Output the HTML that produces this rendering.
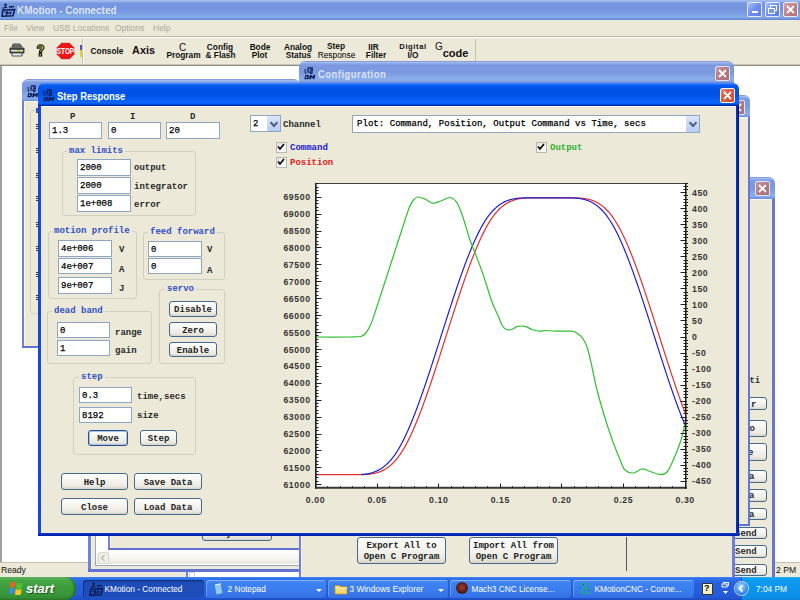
<!DOCTYPE html><html><head><meta charset="utf-8"><style>
*{margin:0;padding:0;box-sizing:content-box}
html,body{width:800px;height:600px;overflow:hidden;background:#fff;position:relative}
body>div,body>svg{position:absolute}
div{position:absolute}
.t{white-space:nowrap;font-family:"Liberation Mono",monospace;font-size:9px;font-weight:bold;color:#2a2a2a;line-height:13px}
.tt{white-space:nowrap;font-family:"Liberation Sans",sans-serif;font-size:11px;font-weight:bold;transform:scaleX(.86);transform-origin:0 0;line-height:14px}
.ed{background:#fff;border:1px solid #8EA6C0;font-family:"Liberation Mono",monospace;font-size:9px;font-weight:normal;color:#000;-webkit-text-stroke:.25px #000;line-height:16px;text-indent:2px;white-space:nowrap;overflow:hidden}
.bt{border:1px solid #46698E;border-radius:3px;background:linear-gradient(180deg,#FFFFFF 0%,#F6F5F0 40%,#ECEAE2 80%,#D8D4C8 100%);font-family:"Liberation Mono",monospace;font-size:9px;font-weight:bold;color:#222;text-align:center;white-space:nowrap}
.gb{border:1px solid #D0D0BF;border-radius:3px}
.gl{background:#ECE9D8;padding:0 2px;margin-top:1px;font-family:"Liberation Mono",monospace;font-size:9px;font-weight:bold;color:#3050C8;line-height:11px;white-space:nowrap}
.tl{white-space:nowrap;font-family:"Liberation Sans",sans-serif;text-align:center;line-height:10px}
.dd{width:13px;height:15px;background:linear-gradient(180deg,#DCE6FC,#B8CCF6);border:0;border-radius:1px}
.dd::after{content:'';position:absolute;left:3.5px;top:4px;width:4px;height:4px;border-right:2px solid #4D6185;border-bottom:2px solid #4D6185;transform:rotate(45deg)}
.cb{width:9px;height:9px;border:1px solid #B8B8B0;background:linear-gradient(135deg,#E4E4DC,#FFFFFF)}
</style></head><body>
<div style="left:0;top:0;width:800px;height:20px;background:linear-gradient(180deg,#A6C0F0 0px,#96B2EC 1.5px,#7898E0 3px,#7394DE 9px,#7A9EE2 13px,#84ACE8 16.5px,#7EA2E4 18px,#5C7ED0 20px);"></div>
<svg style="position:absolute;left:1px;top:3px" width="15" height="14" viewBox="0 0 15 14"><g fill="none" stroke="#0A1A50"><circle cx="4.5" cy="1.8" r=".9" fill="#0A1A50"/><path d="M2.5 4.6L6 4.2M8 4L13 3.6" stroke-width="1.4"/><path d="M1.8 7.2L13.6 6.6L12 12.8L1 13.2Z" stroke-width="1.5"/><path d="M3.5 9.8L6.5 8.8L5.5 11.2L10 9.2L9.2 11.6" stroke-width="1.1"/></g><path d="M2 4.9L2.6 6.2" stroke="#0A1A50" stroke-width="1"/></svg>
<div class="tt" style="left:17px;top:3px;color:#DDE6F8;font-size:11.5px;">KMotion - Connected</div>
<div style="left:747px;top:2px;width:13px;height:13px;border:1px solid #E8EEFC;border-radius:2px;background:linear-gradient(135deg,#A8C0F8 0%,#6C8EEE 50%,#5A7EE0 100%);"></div>
<div style="left:765px;top:2px;width:13px;height:13px;border:1px solid #E8EEFC;border-radius:2px;background:linear-gradient(135deg,#A8C0F8 0%,#6C8EEE 50%,#5A7EE0 100%);"></div>
<div style="left:783px;top:2px;width:13px;height:13px;border:1px solid #E8EEFC;border-radius:2px;background:linear-gradient(135deg,#D6A0A8 0%,#C08088 50%,#B07078 100%);"></div>
<div style="left:752px;top:11px;width:6px;height:2px;background:#fff"></div>
<svg style="position:absolute;left:765px;top:2px" width="15" height="15"><rect x="5.5" y="3.5" width="6" height="5" fill="none" stroke="#fff" stroke-width="1"/><rect x="3.5" y="6.5" width="6" height="5" fill="#7A98EA" stroke="#fff" stroke-width="1"/></svg>
<svg style="position:absolute;left:783px;top:2px" width="15" height="15"><path d="M4 4L11 11M11 4L4 11" stroke="#fff" stroke-width="1.8"/></svg>
<div style="left:0;top:20px;width:800px;height:16px;background:#ECE9D8;"></div>
<div class="t" style="left:4px;top:22px;font-family:&quot;Liberation Sans&quot;,sans-serif;font-weight:normal;font-size:8.5px;color:#ACA899;line-height:12px">File</div>
<div class="t" style="left:26px;top:22px;font-family:&quot;Liberation Sans&quot;,sans-serif;font-weight:normal;font-size:8.5px;color:#ACA899;line-height:12px">View</div>
<div class="t" style="left:53px;top:22px;font-family:&quot;Liberation Sans&quot;,sans-serif;font-weight:normal;font-size:8.5px;color:#ACA899;line-height:12px">USB Locations</div>
<div class="t" style="left:115px;top:22px;font-family:&quot;Liberation Sans&quot;,sans-serif;font-weight:normal;font-size:8.5px;color:#ACA899;line-height:12px">Options</div>
<div class="t" style="left:153px;top:22px;font-family:&quot;Liberation Sans&quot;,sans-serif;font-weight:normal;font-size:8.5px;color:#ACA899;line-height:12px">Help</div>
<div style="left:0;top:36px;width:800px;height:1px;background:#BCB8A6;"></div>
<div style="left:0;top:37px;width:800px;height:1px;background:#FFFFFF;"></div>
<div style="left:0;top:38px;width:800px;height:27px;background:#ECE9D8;"></div>
<div style="left:0;top:64px;width:800px;height:1px;background:#C9C5B5;"></div>
<div style="left:0;top:65px;width:800px;height:1px;background:#8E8B7E;"></div>
<div style="left:82px;top:39px;width:1px;height:25px;background:#C5C2B2;"></div>
<div style="left:83px;top:39px;width:1px;height:25px;background:#FFFFFF;"></div>
<div style="left:475px;top:39px;width:1px;height:25px;background:#C5C2B2;"></div>
<div style="left:0;top:66px;width:800px;height:497px;background:#FFFFFF;"></div>
<div style="left:0;top:66px;width:2px;height:497px;background:#A0A0A0;"></div>
<div style="left:0;top:562px;width:800px;height:15px;background:#ECE9D8;"></div>
<div style="left:0;top:562px;width:800px;height:1px;background:#C5C1B0;"></div>
<div class="t" style="left:1px;top:564px;font-family:&quot;Liberation Sans&quot;,sans-serif;font-weight:normal;font-size:8.6px;color:#111;line-height:12px">Ready</div>
<div class="t" style="left:776px;top:564px;font-family:&quot;Liberation Sans&quot;,sans-serif;font-weight:normal;font-size:8.6px;color:#111;line-height:12px">2 PM</div>
<svg style="position:absolute;left:9px;top:43px" width="16" height="14" viewBox="0 0 16 14">
<path d="M4 1h7l2 3H3z" fill="#777" stroke="#333" stroke-width=".8"/>
<path d="M1 5h14v5H1z" fill="#555" stroke="#222" stroke-width=".8"/>
<path d="M2 7h12v1.5H2z" fill="#E8E8E0"/>
<path d="M3 10h10v3H3z" fill="#EEE" stroke="#333" stroke-width=".8"/>
<rect x="8" y="7" width="3" height="1.5" fill="#A0D020"/>
</svg>
<svg style="position:absolute;left:35px;top:44px" width="11" height="13" viewBox="0 0 11 13">
<path d="M2.2 4.2C2.2 1.5 4 .8 5.6 .8S9 1.8 9 3.8C9 5.6 6.6 6 6.4 8.4H4.4C4.4 5.4 6.6 5 6.6 3.8C6.6 3 6.2 2.6 5.5 2.6S4.4 3.2 4.4 4.2Z" fill="#E8E020" stroke="#222" stroke-width="1.2"/>
<rect x="4.2" y="9.6" width="2.4" height="2.4" fill="#E8E020" stroke="#222" stroke-width="1.2"/>
</svg>
<svg style="position:absolute;left:56px;top:42px" width="19" height="18" viewBox="0 0 19 18">
<path d="M5.5 .5h8l5 5v7l-5 5h-8l-5-5v-7z" fill="#E81818" stroke="#D8D8D8" stroke-width=".8"/>
<text x="9.5" y="11.6" text-anchor="middle" font-family="Liberation Sans" font-weight="bold" font-size="6.4" fill="#fff" transform="scale(1,1.3) translate(0,-2.5)">STOP</text>
</svg>
<div style="left:80px;top:45px;width:2px;height:5px;background:#5050B0"></div>
<div style="left:80px;top:50px;width:2px;height:7px;background:#E0D040"></div>
<div class="tl" style="left:70px;top:46px;width:74px;font-size:8.4px;font-weight:bold;color:#111">Console</div>
<div class="tl" style="left:113px;top:45px;width:61px;font-size:10.8px;font-weight:bold;color:#111">Axis</div>
<div class="tl" style="left:159px;top:43px;width:47px;font-size:10px;font-weight:normal;color:#111">C</div>
<div class="tl" style="left:147px;top:50px;width:73px;font-size:8.3px;font-weight:bold;color:#111">Program</div>
<div class="tl" style="left:187px;top:42px;width:66px;font-size:8.3px;font-weight:bold;color:#111">Config</div>
<div class="tl" style="left:185px;top:50px;width:71px;font-size:8.3px;font-weight:bold;color:#111">&amp; Flash</div>
<div class="tl" style="left:230px;top:42px;width:60px;font-size:8.3px;font-weight:bold;color:#111">Bode</div>
<div class="tl" style="left:231px;top:50px;width:57px;font-size:8.3px;font-weight:bold;color:#111">Plot</div>
<div class="tl" style="left:264px;top:42px;width:68px;font-size:8.3px;font-weight:bold;color:#111">Analog</div>
<div class="tl" style="left:266px;top:50px;width:65px;font-size:8.3px;font-weight:bold;color:#111">Status</div>
<div class="tl" style="left:307px;top:41px;width:58px;font-size:8.3px;font-weight:bold;color:#111">Step</div>
<div class="tl" style="left:299px;top:50px;width:75px;font-size:8.4px;font-weight:normal;color:#000">Response</div>
<div class="tl" style="left:348px;top:42px;width:51px;font-size:8.3px;font-weight:bold;color:#111">IIR</div>
<div class="tl" style="left:346px;top:50px;width:60px;font-size:8.3px;font-weight:bold;color:#111">Filter</div>
<div class="tl" style="left:380px;top:42px;width:66px;font-size:7.6px;font-weight:bold;color:#111"><span style="letter-spacing:.6px">Digital</span></div>
<div class="tl" style="left:387px;top:50px;width:52px;font-size:8.3px;font-weight:bold;color:#111">I/O</div>
<div class="tl" style="left:416px;top:42px;width:46px;font-size:10px;font-weight:normal;color:#111">G</div>
<div class="tl" style="left:424px;top:48px;width:63px;font-size:11px;font-weight:bold;color:#111">code</div>
<div style="left:88px;top:440px;width:214px;height:23px;background:linear-gradient(180deg,#7080C0 0px,#A8C0F2 1.2px,#8CA8E8 2.5px,#7C98E0 4.5px,#7A98E0 11px,#84A4E6 15px,#8AAEEA 18px,#88A8E8 20px,#6A86D8 22px);border-radius:6px 6px 0 0;"></div>
<div style="left:88px;top:463px;width:3px;height:109px;background:#7080DC;"></div>
<div style="left:299px;top:463px;width:3px;height:109px;background:#6676D6;"></div>
<div style="left:88px;top:569px;width:214px;height:3px;background:#6272D2;"></div>
<div style="left:91px;top:463px;width:208px;height:106px;background:#ECE9D8;box-shadow:inset 1px 1px 0 #FBFAF6;"></div>
<div style="left:95px;top:520px;width:210px;height:45px;background:#fff;border-left:1px solid #8FA8C0;border-bottom:1px solid #8FA8C0;"></div>
<div style="left:96px;top:550px;width:206px;height:14px;background:linear-gradient(180deg,#FFFFFF 0%,#F6F5F0 60%,#E8E6DC 100%);"></div>
<div style="left:98px;top:552px;width:9px;height:10px;border:1px solid #D8D8D0;border-radius:2px;background:#F0F0EA;"></div>
<svg style="position:absolute;left:98px;top:552px" width="11" height="12"><path d="M6.5 3L3.5 6L6.5 9" stroke="#B8B8B0" stroke-width="1.2" fill="none"/></svg>
<div style="left:108px;top:420px;width:194px;height:23px;background:linear-gradient(180deg,#7080C0 0px,#A8C0F2 1.2px,#8CA8E8 2.5px,#7C98E0 4.5px,#7A98E0 11px,#84A4E6 15px,#8AAEEA 18px,#88A8E8 20px,#6A86D8 22px);border-radius:6px 6px 0 0;"></div>
<div style="left:108px;top:443px;width:2px;height:107px;background:#7080DC;"></div>
<div style="left:300px;top:443px;width:2px;height:107px;background:#6676D6;"></div>
<div style="left:108px;top:548px;width:194px;height:2px;background:#6272D2;"></div>
<div style="left:110px;top:443px;width:190px;height:105px;background:#ECE9D8;box-shadow:inset 1px 1px 0 #FBFAF6;"></div>
<div class="bt" style="left:202px;top:520px;width:68px;height:19px;line-height:22px;line-height:26px">Keyboard</div>
<div style="left:186px;top:572px;width:2px;height:5px;background:#7080D8"></div>
<div style="left:188px;top:572px;width:112px;height:5px;background:#fff"></div>
<div style="left:189px;top:572px;width:4px;height:4px;border:1px solid #C8D0E0;"></div>
<div style="left:22px;top:79px;width:278px;height:22px;background:linear-gradient(180deg,#7080C0 0px,#A8C0F2 1.2px,#8CA8E8 2.5px,#7C98E0 4.5px,#7A98E0 11px,#84A4E6 15px,#8AAEEA 18px,#88A8E8 20px,#6A86D8 22px);border-radius:6px 6px 0 0;"></div>
<div style="left:22px;top:101px;width:2px;height:247px;background:#7080DC;"></div>
<div style="left:298px;top:101px;width:2px;height:247px;background:#6676D6;"></div>
<div style="left:22px;top:346px;width:278px;height:2px;background:#6272D2;"></div>
<div style="left:24px;top:101px;width:274px;height:245px;background:#ECE9D8;box-shadow:inset 1px 1px 0 #FBFAF6;"></div>
<svg style="position:absolute;left:27px;top:85px" width="12" height="13" viewBox="0 0 12 13"><g fill="#0A1E58"><rect x="3.5" y="0.3" width="5.5" height="1.4"/><rect x="0.3" y="2.3" width="1.6" height="1.3"/><rect x="3.2" y="2.2" width="1.6" height="1.8"/><rect x="6.4" y="2.2" width="2.6" height="1.8"/><rect x="0.5" y="4.4" width="2" height="1.2"/><rect x="3.5" y="4.4" width="5.2" height="1.3"/><rect x="1" y="6" width="1.2" height="1"/><rect x="6" y="6" width="2.6" height="1"/><path d="M1.3 8h3l.9.9-.9 3.3H.3zM2.2 9.2l-.5 1.9h1.2l.6-1.9z M5.9 8h1.5l.9 1.6 1.5-1.6h1.6l-1.2 4.2H8.9l.5-2-1.2 1.3-.8-1.3-.5 2H5z"/></g></svg>
<div class="gb" style="left:30px;top:110px;width:200px;height:202px;"></div>
<div style="left:36px;top:124px;width:2px;height:1px;background:#333"></div><div style="left:36px;top:126px;width:2px;height:1px;background:#333"></div><div style="left:36px;top:128px;width:2px;height:1px;background:#333"></div>
<div style="left:36px;top:148px;width:2px;height:1px;background:#333"></div><div style="left:36px;top:150px;width:2px;height:1px;background:#333"></div><div style="left:36px;top:152px;width:2px;height:1px;background:#333"></div>
<div style="left:36px;top:173px;width:2px;height:1px;background:#333"></div><div style="left:36px;top:175px;width:2px;height:1px;background:#333"></div><div style="left:36px;top:177px;width:2px;height:1px;background:#333"></div>
<div style="left:36px;top:196px;width:2px;height:1px;background:#333"></div><div style="left:36px;top:198px;width:2px;height:1px;background:#333"></div><div style="left:36px;top:200px;width:2px;height:1px;background:#333"></div>
<div style="left:36px;top:222px;width:2px;height:1px;background:#333"></div><div style="left:36px;top:224px;width:2px;height:1px;background:#333"></div><div style="left:36px;top:226px;width:2px;height:1px;background:#333"></div>
<div style="left:36px;top:246px;width:2px;height:1px;background:#333"></div><div style="left:36px;top:248px;width:2px;height:1px;background:#333"></div><div style="left:36px;top:250px;width:2px;height:1px;background:#333"></div>
<div style="left:36px;top:272px;width:2px;height:1px;background:#333"></div><div style="left:36px;top:274px;width:2px;height:1px;background:#333"></div><div style="left:36px;top:276px;width:2px;height:1px;background:#333"></div>
<div style="left:36px;top:295px;width:2px;height:1px;background:#333"></div><div style="left:36px;top:297px;width:2px;height:1px;background:#333"></div><div style="left:36px;top:299px;width:2px;height:1px;background:#333"></div>
<div style="left:36px;top:108px;width:2px;height:5px;background:#3A50B0"></div>
<div style="left:560px;top:177px;width:215px;height:22px;background:linear-gradient(180deg,#7080C0 0px,#A8C0F2 1.2px,#8CA8E8 2.5px,#7C98E0 4.5px,#7A98E0 11px,#84A4E6 15px,#8AAEEA 18px,#88A8E8 20px,#6A86D8 22px);border-radius:6px 6px 0 0;"></div>
<div style="left:560px;top:199px;width:3px;height:401px;background:#7080DC;"></div>
<div style="left:772px;top:199px;width:3px;height:401px;background:#6676D6;"></div>
<div style="left:560px;top:597px;width:215px;height:3px;background:#6272D2;"></div>
<div style="left:563px;top:199px;width:209px;height:398px;background:#ECE9D8;box-shadow:inset 1px 1px 0 #FBFAF6;"></div>
<div style="left:755px;top:181px;width:13px;height:13px;border:1px solid #E8E8F8;border-radius:2px;background:linear-gradient(135deg,#C89AA0 0%,#B87880 50%,#A86870 100%);opacity:.95"></div>
<svg style="position:absolute;left:755px;top:181px" width="15" height="15"><path d="M4 4L11 11M11 4L4 11" stroke="#fff" stroke-width="1.8"/></svg>
<div class="t" style="left:744px;top:375px;">uti</div>
<div class="bt" style="left:700px;top:397px;width:65px;height:11px;line-height:14px;"></div>
<div class="bt" style="left:700px;top:420px;width:65px;height:15px;line-height:18px;"></div>
<div class="bt" style="left:700px;top:443px;width:65px;height:16px;line-height:19px;"></div>
<div class="bt" style="left:700px;top:470px;width:65px;height:11px;line-height:14px;"></div>
<div class="bt" style="left:700px;top:489px;width:65px;height:11px;line-height:14px;"></div>
<div class="bt" style="left:700px;top:508px;width:65px;height:10px;line-height:13px;"></div>
<div class="bt" style="left:700px;top:527px;width:65px;height:10px;line-height:13px;"></div>
<div class="bt" style="left:700px;top:545px;width:65px;height:11px;line-height:14px;"></div>
<div class="bt" style="left:700px;top:564px;width:65px;height:10px;line-height:13px;"></div>
<div class="t" style="left:751px;top:399px;">r</div>
<div class="t" style="left:744px;top:423px;">do</div>
<div class="t" style="left:748px;top:447px;">e</div>
<div class="t" style="left:749px;top:471px;">a</div>
<div class="t" style="left:749px;top:490px;">a</div>
<div class="t" style="left:749px;top:509px;">a</div>
<div class="t" style="left:735px;top:528px;">Send</div>
<div class="t" style="left:735px;top:546px;">Send</div>
<div class="t" style="left:735px;top:565px;">Send</div>
<div style="left:300px;top:95px;width:450px;height:22px;background:linear-gradient(180deg,#7080C0 0px,#A8C0F2 1.2px,#8CA8E8 2.5px,#7C98E0 4.5px,#7A98E0 11px,#84A4E6 15px,#8AAEEA 18px,#88A8E8 20px,#6A86D8 22px);border-radius:6px 6px 0 0;"></div>
<div style="left:300px;top:117px;width:2px;height:409px;background:#7080DC;"></div>
<div style="left:748px;top:117px;width:2px;height:409px;background:#6676D6;"></div>
<div style="left:300px;top:524px;width:450px;height:2px;background:#6272D2;"></div>
<div style="left:302px;top:117px;width:446px;height:407px;background:#ECE9D8;box-shadow:inset 1px 1px 0 #FBFAF6;"></div>
<div style="left:730px;top:100px;width:13px;height:13px;border:1px solid #E8E8F8;border-radius:2px;background:linear-gradient(135deg,#C89AA0 0%,#B87880 50%,#A86870 100%);opacity:.95"></div>
<svg style="position:absolute;left:730px;top:100px" width="15" height="15"><path d="M4 4L11 11M11 4L4 11" stroke="#fff" stroke-width="1.8"/></svg>
<div style="left:299px;top:61px;width:435px;height:22px;background:linear-gradient(180deg,#7080C0 0px,#A8C0F2 1.2px,#8CA8E8 2.5px,#7C98E0 4.5px,#7A98E0 11px,#84A4E6 15px,#8AAEEA 18px,#88A8E8 20px,#6A86D8 22px);border-radius:6px 6px 0 0;"></div>
<div style="left:299px;top:83px;width:2px;height:517px;background:#7080DC;"></div>
<div style="left:732px;top:83px;width:2px;height:517px;background:#6676D6;"></div>
<div style="left:299px;top:598px;width:435px;height:2px;background:#6272D2;"></div>
<div style="left:301px;top:83px;width:431px;height:515px;background:#ECE9D8;box-shadow:inset 1px 1px 0 #FBFAF6;"></div>
<svg style="position:absolute;left:304px;top:67px" width="12" height="13" viewBox="0 0 12 13"><g fill="#0A1E58"><rect x="3.5" y="0.3" width="5.5" height="1.4"/><rect x="0.3" y="2.3" width="1.6" height="1.3"/><rect x="3.2" y="2.2" width="1.6" height="1.8"/><rect x="6.4" y="2.2" width="2.6" height="1.8"/><rect x="0.5" y="4.4" width="2" height="1.2"/><rect x="3.5" y="4.4" width="5.2" height="1.3"/><rect x="1" y="6" width="1.2" height="1"/><rect x="6" y="6" width="2.6" height="1"/><path d="M1.3 8h3l.9.9-.9 3.3H.3zM2.2 9.2l-.5 1.9h1.2l.6-1.9z M5.9 8h1.5l.9 1.6 1.5-1.6h1.6l-1.2 4.2H8.9l.5-2-1.2 1.3-.8-1.3-.5 2H5z"/></g></svg>
<div class="tt" style="left:318px;top:67px;color:#DCE4F8"><span style="letter-spacing:.55px">Configuration</span></div>
<div style="left:715px;top:66px;width:13px;height:13px;border:1px solid #E8E8F8;border-radius:2px;background:linear-gradient(135deg,#C89AA0 0%,#B87880 50%,#A86870 100%);opacity:.95"></div>
<svg style="position:absolute;left:715px;top:66px" width="15" height="15"><path d="M4 4L11 11M11 4L4 11" stroke="#fff" stroke-width="1.8"/></svg>
<div style="left:732px;top:536px;width:3px;height:41px;background:#6E7ED8"></div>
<div style="left:38px;top:83px;width:701px;height:23px;background:linear-gradient(180deg,#4A8CF8 0px,#2A78FF 1px,#0A5CF0 2.5px,#0052E6 6px,#0052E6 12px,#085CF4 16px,#0A66FF 19px,#0A5EF6 20.5px,#0038C0 22px,#0028A0 23px);border-radius:6px 6px 0 0;"></div>
<div style="left:38px;top:106px;width:3px;height:430px;background:#0B4AE8;"></div>
<div style="left:736px;top:106px;width:3px;height:430px;background:linear-gradient(90deg,#0838D0,#001288);"></div>
<div style="left:38px;top:533px;width:701px;height:3px;background:linear-gradient(180deg,#0A3CD8,#001AA0);"></div>
<div style="left:41px;top:106px;width:695px;height:427px;background:#ECE9D8;box-shadow:inset 1px 1px 0 #FBFAF6;"></div>
<svg style="position:absolute;left:43px;top:89px" width="12" height="13" viewBox="0 0 12 13"><g fill="#0A1E58"><rect x="3.5" y="0.3" width="5.5" height="1.4"/><rect x="0.3" y="2.3" width="1.6" height="1.3"/><rect x="3.2" y="2.2" width="1.6" height="1.8"/><rect x="6.4" y="2.2" width="2.6" height="1.8"/><rect x="0.5" y="4.4" width="2" height="1.2"/><rect x="3.5" y="4.4" width="5.2" height="1.3"/><rect x="1" y="6" width="1.2" height="1"/><rect x="6" y="6" width="2.6" height="1"/><path d="M1.3 8h3l.9.9-.9 3.3H.3zM2.2 9.2l-.5 1.9h1.2l.6-1.9z M5.9 8h1.5l.9 1.6 1.5-1.6h1.6l-1.2 4.2H8.9l.5-2-1.2 1.3-.8-1.3-.5 2H5z"/></g></svg>
<div class="tt" style="left:57px;top:89px;color:#FFFFFF">Step Response</div>
<div style="left:720px;top:88px;width:13px;height:13px;border:1px solid #FFFFFF;border-radius:2px;background:linear-gradient(135deg,#F0A090 0%,#E5603A 35%,#D0502A 100%);opacity:.95"></div>
<svg style="position:absolute;left:720px;top:88px" width="15" height="15"><path d="M4 4L11 11M11 4L4 11" stroke="#fff" stroke-width="1.8"/></svg>
<div class="t" style="left:70px;top:111px;">P</div>
<div class="t" style="left:130px;top:111px;">I</div>
<div class="t" style="left:190px;top:111px;">D</div>
<div class="ed" style="left:49px;top:122px;width:51px;height:15px;">1.3</div>
<div class="ed" style="left:108px;top:122px;width:51px;height:15px;">0</div>
<div class="ed" style="left:166px;top:122px;width:52px;height:15px;">20</div>
<div class="gb" style="left:62px;top:151px;width:132px;height:63px;"></div>
<div class="gl" style="left:67px;top:145px;">max limits</div>
<div class="ed" style="left:77px;top:159px;width:52px;height:15px;">2000</div>
<div class="ed" style="left:77px;top:177px;width:52px;height:15px;">2000</div>
<div class="ed" style="left:77px;top:195px;width:52px;height:15px;">1e+008</div>
<div class="t" style="left:134px;top:162px;">output</div>
<div class="t" style="left:134px;top:181px;">integrator</div>
<div class="t" style="left:134px;top:199px;">error</div>
<div class="gb" style="left:48px;top:231px;width:87px;height:66px;"></div>
<div class="gl" style="left:52px;top:225px;">motion profile</div>
<div class="ed" style="left:58px;top:240px;width:52px;height:15px;">4e+006</div>
<div class="ed" style="left:58px;top:258px;width:52px;height:14px;">4e+007</div>
<div class="ed" style="left:58px;top:277px;width:52px;height:15px;">9e+007</div>
<div class="t" style="left:119px;top:244px;">V</div>
<div class="t" style="left:119px;top:264px;">A</div>
<div class="t" style="left:119px;top:283px;">J</div>
<div class="gb" style="left:143px;top:232px;width:80px;height:46px;"></div>
<div class="gl" style="left:148px;top:226px;">feed forward</div>
<div class="ed" style="left:148px;top:241px;width:52px;height:14px;">0</div>
<div class="ed" style="left:148px;top:258px;width:52px;height:14px;">0</div>
<div class="t" style="left:207px;top:244px;">V</div>
<div class="t" style="left:207px;top:265px;">A</div>
<div class="gb" style="left:159px;top:289px;width:64px;height:73px;"></div>
<div class="gl" style="left:165px;top:283px;">servo</div>
<div class="bt" style="left:169px;top:301px;width:46px;height:14px;line-height:17px;">Disable</div>
<div class="bt" style="left:169px;top:322px;width:46px;height:13px;line-height:16px;">Zero</div>
<div class="bt" style="left:169px;top:342px;width:46px;height:13px;line-height:16px;">Enable</div>
<div class="gb" style="left:47px;top:311px;width:103px;height:51px;"></div>
<div class="gl" style="left:52px;top:305px;">dead band</div>
<div class="ed" style="left:57px;top:322px;width:51px;height:14px;">0</div>
<div class="ed" style="left:57px;top:340px;width:51px;height:14px;">1</div>
<div class="t" style="left:115px;top:327px;">range</div>
<div class="t" style="left:115px;top:345px;">gain</div>
<div class="gb" style="left:73px;top:377px;width:121px;height:76px;"></div>
<div class="gl" style="left:79px;top:371px;">step</div>
<div class="ed" style="left:79px;top:387px;width:51px;height:14px;">0.3</div>
<div class="ed" style="left:79px;top:407px;width:51px;height:14px;">8192</div>
<div class="t" style="left:137px;top:391px;">time,secs</div>
<div class="t" style="left:137px;top:410px;">size</div>
<div class="bt" style="left:88px;top:430px;width:38px;height:14px;line-height:17px;box-shadow:inset 0 0 0 1px #A8C4EE;border-color:#2A4E80">Move</div>
<div class="bt" style="left:140px;top:430px;width:35px;height:14px;line-height:17px;">Step</div>
<div class="bt" style="left:61px;top:473px;width:65px;height:15px;line-height:18px;">Help</div>
<div class="bt" style="left:134px;top:473px;width:66px;height:15px;line-height:18px;">Save Data</div>
<div class="bt" style="left:61px;top:498px;width:65px;height:15px;line-height:18px;">Close</div>
<div class="bt" style="left:134px;top:498px;width:66px;height:15px;line-height:18px;">Load Data</div>
<div class="ed" style="left:250px;top:115px;width:29px;height:15px;">2</div>
<div class="dd" style="left:267px;top:116px;"></div>
<div class="t" style="left:283px;top:119px;">Channel</div>
<div class="ed" style="left:352px;top:115px;width:346px;height:16px;"><span style="margin-left:2px;letter-spacing:.05px">Plot: Command, Position, Output Command vs Time, secs</span></div>
<div class="dd" style="left:686px;top:116px;height:16px"></div>
<div class="cb" style="left:276px;top:142px;"></div>
<svg style="position:absolute;left:276px;top:142px" width="10" height="10"><path d="M2 4.5L4 7L8 2" stroke="#000" stroke-width="1.6" fill="none"/></svg>
<div class="t" style="left:290px;top:142px;color:#2020D0;">Command</div>
<div class="cb" style="left:276px;top:157px;"></div>
<svg style="position:absolute;left:276px;top:157px" width="10" height="10"><path d="M2 4.5L4 7L8 2" stroke="#000" stroke-width="1.6" fill="none"/></svg>
<div class="t" style="left:290px;top:157px;color:#E02020;">Position</div>
<div class="cb" style="left:536px;top:142px;"></div>
<svg style="position:absolute;left:536px;top:142px" width="10" height="10"><path d="M2 4.5L4 7L8 2" stroke="#000" stroke-width="1.6" fill="none"/></svg>
<div class="t" style="left:550px;top:142px;color:#30B030;">Output</div>
<svg style="position:absolute;left:0;top:0" width="800" height="600"><rect x="315.5" y="183" width="370" height="305" fill="#FFFFFF"/><path d="M315.50,474.60 L316.00,474.60 L316.50,474.60 L317.00,474.60 L317.50,474.60 L318.00,474.60 L318.50,474.60 L319.00,474.60 L319.50,474.60 L320.00,474.60 L320.50,474.60 L321.00,474.60 L321.50,474.60 L322.00,474.60 L322.50,474.60 L323.00,474.60 L323.50,474.60 L324.00,474.60 L324.50,474.60 L325.00,474.60 L325.50,474.60 L326.00,474.60 L326.50,474.60 L327.00,474.60 L327.50,474.60 L328.00,474.60 L328.50,474.60 L329.00,474.60 L329.50,474.60 L330.00,474.60 L330.50,474.60 L331.00,474.60 L331.50,474.60 L332.00,474.60 L332.50,474.60 L333.00,474.60 L333.50,474.60 L334.00,474.60 L334.50,474.60 L335.00,474.60 L335.50,474.60 L336.00,474.60 L336.50,474.60 L337.00,474.60 L337.50,474.60 L338.00,474.60 L338.50,474.60 L339.00,474.60 L339.50,474.60 L340.00,474.60 L340.50,474.60 L341.00,474.60 L341.50,474.60 L342.00,474.60 L342.50,474.60 L343.00,474.60 L343.50,474.60 L344.00,474.60 L344.50,474.60 L345.00,474.60 L345.50,474.60 L346.00,474.60 L346.50,474.60 L347.00,474.60 L347.50,474.60 L348.00,474.60 L348.50,474.60 L349.00,474.60 L349.50,474.60 L350.00,474.60 L350.50,474.60 L351.00,474.60 L351.50,474.60 L352.00,474.60 L352.50,474.60 L353.00,474.60 L353.50,474.60 L354.00,474.60 L354.50,474.60 L355.00,474.60 L355.50,474.60 L356.00,474.60 L356.50,474.60 L357.00,474.60 L357.50,474.60 L358.00,474.60 L358.50,474.60 L359.00,474.60 L359.50,474.60 L360.00,474.60 L360.50,474.60 L361.00,474.59 L361.50,474.59 L362.00,474.58 L362.50,474.58 L363.00,474.57 L363.50,474.55 L364.00,474.54 L364.50,474.53 L365.00,474.51 L365.50,474.49 L366.00,474.46 L366.50,474.43 L367.00,474.40 L367.50,474.37 L368.00,474.33 L368.50,474.29 L369.00,474.24 L369.50,474.19 L370.00,474.13 L370.50,474.07 L371.00,474.01 L371.50,473.93 L372.00,473.86 L372.50,473.77 L373.00,473.69 L373.50,473.59 L374.00,473.49 L374.50,473.38 L375.00,473.27 L375.50,473.15 L376.00,473.02 L376.50,472.89 L377.00,472.74 L377.50,472.59 L378.00,472.43 L378.50,472.27 L379.00,472.09 L379.50,471.91 L380.00,471.72 L380.50,471.52 L381.00,471.31 L381.50,471.09 L382.00,470.86 L382.50,470.62 L383.00,470.37 L383.50,470.11 L384.00,469.84 L384.50,469.56 L385.00,469.27 L385.50,468.97 L386.00,468.66 L386.50,468.33 L387.00,468.00 L387.50,467.65 L388.00,467.29 L388.50,466.92 L389.00,466.54 L389.50,466.14 L390.00,465.73 L390.50,465.31 L391.00,464.87 L391.50,464.42 L392.00,463.96 L392.50,463.48 L393.00,462.99 L393.50,462.49 L394.00,461.97 L394.50,461.44 L395.00,460.89 L395.50,460.33 L396.00,459.75 L396.50,459.15 L397.00,458.54 L397.50,457.92 L398.00,457.28 L398.50,456.62 L399.00,455.94 L399.50,455.25 L400.00,454.55 L400.50,453.82 L401.00,453.08 L401.50,452.32 L402.00,451.54 L402.50,450.75 L403.00,449.93 L403.50,449.10 L404.00,448.26 L404.50,447.39 L405.00,446.51 L405.50,445.61 L406.00,444.70 L406.50,443.77 L407.00,442.82 L407.50,441.86 L408.00,440.88 L408.50,439.89 L409.00,438.88 L409.50,437.85 L410.00,436.82 L410.50,435.76 L411.00,434.70 L411.50,433.61 L412.00,432.52 L412.50,431.41 L413.00,430.28 L413.50,429.15 L414.00,428.00 L414.50,426.84 L415.00,425.66 L415.50,424.47 L416.00,423.27 L416.50,422.06 L417.00,420.83 L417.50,419.60 L418.00,418.35 L418.50,417.09 L419.00,415.82 L419.50,414.54 L420.00,413.24 L420.50,411.94 L421.00,410.63 L421.50,409.31 L422.00,407.97 L422.50,406.63 L423.00,405.28 L423.50,403.91 L424.00,402.54 L424.50,401.16 L425.00,399.77 L425.50,398.38 L426.00,396.97 L426.50,395.56 L427.00,394.14 L427.50,392.71 L428.00,391.27 L428.50,389.82 L429.00,388.37 L429.50,386.92 L430.00,385.45 L430.50,383.98 L431.00,382.50 L431.50,381.02 L432.00,379.53 L432.50,378.03 L433.00,376.53 L433.50,375.03 L434.00,373.51 L434.50,372.00 L435.00,370.48 L435.50,368.95 L436.00,367.42 L436.50,365.89 L437.00,364.35 L437.50,362.81 L438.00,361.27 L438.50,359.72 L439.00,358.17 L439.50,356.61 L440.00,355.06 L440.50,353.50 L441.00,351.94 L441.50,350.37 L442.00,348.81 L442.50,347.24 L443.00,345.68 L443.50,344.11 L444.00,342.54 L444.50,340.97 L445.00,339.39 L445.50,337.82 L446.00,336.25 L446.50,334.68 L447.00,333.11 L447.50,331.53 L448.00,329.96 L448.50,328.39 L449.00,326.82 L449.50,325.26 L450.00,323.69 L450.50,322.13 L451.00,320.56 L451.50,319.00 L452.00,317.44 L452.50,315.89 L453.00,314.33 L453.50,312.78 L454.00,311.23 L454.50,309.69 L455.00,308.15 L455.50,306.61 L456.00,305.08 L456.50,303.55 L457.00,302.02 L457.50,300.50 L458.00,298.99 L458.50,297.47 L459.00,295.97 L459.50,294.47 L460.00,292.97 L460.50,291.48 L461.00,290.00 L461.50,288.52 L462.00,287.05 L462.50,285.58 L463.00,284.13 L463.50,282.68 L464.00,281.23 L464.50,279.79 L465.00,278.36 L465.50,276.94 L466.00,275.53 L466.50,274.12 L467.00,272.73 L467.50,271.34 L468.00,269.96 L468.50,268.59 L469.00,267.22 L469.50,265.87 L470.00,264.53 L470.50,263.19 L471.00,261.87 L471.50,260.56 L472.00,259.26 L472.50,257.96 L473.00,256.68 L473.50,255.41 L474.00,254.15 L474.50,252.90 L475.00,251.67 L475.50,250.44 L476.00,249.23 L476.50,248.03 L477.00,246.84 L477.50,245.66 L478.00,244.50 L478.50,243.35 L479.00,242.22 L479.50,241.09 L480.00,239.98 L480.50,238.89 L481.00,237.80 L481.50,236.74 L482.00,235.68 L482.50,234.65 L483.00,233.62 L483.50,232.61 L484.00,231.62 L484.50,230.64 L485.00,229.68 L485.50,228.73 L486.00,227.80 L486.50,226.89 L487.00,225.99 L487.50,225.11 L488.00,224.24 L488.50,223.40 L489.00,222.57 L489.50,221.75 L490.00,220.96 L490.50,220.18 L491.00,219.42 L491.50,218.68 L492.00,217.95 L492.50,217.25 L493.00,216.56 L493.50,215.88 L494.00,215.22 L494.50,214.58 L495.00,213.96 L495.50,213.35 L496.00,212.75 L496.50,212.17 L497.00,211.61 L497.50,211.06 L498.00,210.53 L498.50,210.01 L499.00,209.51 L499.50,209.02 L500.00,208.54 L500.50,208.08 L501.00,207.63 L501.50,207.19 L502.00,206.77 L502.50,206.36 L503.00,205.96 L503.50,205.58 L504.00,205.21 L504.50,204.85 L505.00,204.50 L505.50,204.17 L506.00,203.84 L506.50,203.53 L507.00,203.23 L507.50,202.94 L508.00,202.66 L508.50,202.39 L509.00,202.13 L509.50,201.88 L510.00,201.64 L510.50,201.41 L511.00,201.19 L511.50,200.98 L512.00,200.78 L512.50,200.59 L513.00,200.41 L513.50,200.23 L514.00,200.07 L514.50,199.91 L515.00,199.76 L515.50,199.61 L516.00,199.48 L516.50,199.35 L517.00,199.23 L517.50,199.12 L518.00,199.01 L518.50,198.91 L519.00,198.81 L519.50,198.73 L520.00,198.64 L520.50,198.57 L521.00,198.49 L521.50,198.43 L522.00,198.37 L522.50,198.31 L523.00,198.26 L523.50,198.21 L524.00,198.17 L524.50,198.13 L525.00,198.10 L525.50,198.07 L526.00,198.04 L526.50,198.01 L527.00,197.99 L527.50,197.97 L528.00,197.96 L528.50,197.95 L529.00,197.93 L529.50,197.92 L530.00,197.92 L530.50,197.91 L531.00,197.91 L531.50,197.90 L532.00,197.90 L532.50,197.90 L533.00,197.90 L533.50,197.90 L534.00,197.90 L534.50,197.90 L535.00,197.90 L535.50,197.90 L536.00,197.90 L536.50,197.90 L537.00,197.90 L537.50,197.90 L538.00,197.90 L538.50,197.90 L539.00,197.90 L539.50,197.90 L540.00,197.90 L540.50,197.90 L541.00,197.90 L541.50,197.90 L542.00,197.90 L542.50,197.90 L543.00,197.90 L543.50,197.90 L544.00,197.90 L544.50,197.90 L545.00,197.90 L545.50,197.90 L546.00,197.90 L546.50,197.90 L547.00,197.90 L547.50,197.90 L548.00,197.90 L548.50,197.90 L549.00,197.90 L549.50,197.90 L550.00,197.90 L550.50,197.90 L551.00,197.90 L551.50,197.90 L552.00,197.90 L552.50,197.90 L553.00,197.90 L553.50,197.90 L554.00,197.90 L554.50,197.90 L555.00,197.90 L555.50,197.90 L556.00,197.90 L556.50,197.90 L557.00,197.90 L557.50,197.90 L558.00,197.90 L558.50,197.90 L559.00,197.90 L559.50,197.90 L560.00,197.90 L560.50,197.90 L561.00,197.90 L561.50,197.90 L562.00,197.90 L562.50,197.90 L563.00,197.90 L563.50,197.90 L564.00,197.90 L564.50,197.90 L565.00,197.90 L565.50,197.90 L566.00,197.90 L566.50,197.90 L567.00,197.90 L567.50,197.90 L568.00,197.90 L568.50,197.90 L569.00,197.90 L569.50,197.90 L570.00,197.90 L570.50,197.90 L571.00,197.90 L571.50,197.90 L572.00,197.90 L572.50,197.90 L573.00,197.90 L573.50,197.90 L574.00,197.91 L574.50,197.91 L575.00,197.91 L575.50,197.92 L576.00,197.93 L576.50,197.94 L577.00,197.95 L577.50,197.96 L578.00,197.98 L578.50,198.00 L579.00,198.02 L579.50,198.05 L580.00,198.08 L580.50,198.11 L581.00,198.15 L581.50,198.19 L582.00,198.23 L582.50,198.28 L583.00,198.33 L583.50,198.39 L584.00,198.45 L584.50,198.52 L585.00,198.60 L585.50,198.68 L586.00,198.76 L586.50,198.85 L587.00,198.95 L587.50,199.05 L588.00,199.16 L588.50,199.28 L589.00,199.40 L589.50,199.53 L590.00,199.67 L590.50,199.82 L591.00,199.97 L591.50,200.13 L592.00,200.30 L592.50,200.48 L593.00,200.67 L593.50,200.86 L594.00,201.07 L594.50,201.28 L595.00,201.50 L595.50,201.74 L596.00,201.98 L596.50,202.23 L597.00,202.49 L597.50,202.77 L598.00,203.05 L598.50,203.35 L599.00,203.65 L599.50,203.97 L600.00,204.30 L600.50,204.64 L601.00,204.99 L601.50,205.36 L602.00,205.73 L602.50,206.12 L603.00,206.52 L603.50,206.94 L604.00,207.36 L604.50,207.81 L605.00,208.26 L605.50,208.73 L606.00,209.21 L606.50,209.71 L607.00,210.22 L607.50,210.74 L608.00,211.28 L608.50,211.83 L609.00,212.40 L609.50,212.99 L610.00,213.59 L610.50,214.21 L611.00,214.84 L611.50,215.49 L612.00,216.15 L612.50,216.83 L613.00,217.53 L613.50,218.24 L614.00,218.97 L614.50,219.72 L615.00,220.49 L615.50,221.27 L616.00,222.08 L616.50,222.90 L617.00,223.73 L617.50,224.59 L618.00,225.46 L618.50,226.35 L619.00,227.25 L619.50,228.17 L620.00,229.11 L620.50,230.06 L621.00,231.03 L621.50,232.01 L622.00,233.01 L622.50,234.03 L623.00,235.06 L623.50,236.10 L624.00,237.16 L624.50,238.24 L625.00,239.32 L625.50,240.42 L626.00,241.54 L626.50,242.67 L627.00,243.81 L627.50,244.97 L628.00,246.13 L628.50,247.31 L629.00,248.51 L629.50,249.71 L630.00,250.93 L630.50,252.16 L631.00,253.40 L631.50,254.65 L632.00,255.92 L632.50,257.19 L633.00,258.48 L633.50,259.78 L634.00,261.08 L634.50,262.40 L635.00,263.73 L635.50,265.06 L636.00,266.41 L636.50,267.77 L637.00,269.13 L637.50,270.51 L638.00,271.89 L638.50,273.28 L639.00,274.68 L639.50,276.09 L640.00,277.51 L640.50,278.94 L641.00,280.37 L641.50,281.81 L642.00,283.25 L642.50,284.71 L643.00,286.17 L643.50,287.64 L644.00,289.11 L644.50,290.59 L645.00,292.08 L645.50,293.57 L646.00,295.07 L646.50,296.57 L647.00,298.08 L647.50,299.59 L648.00,301.11 L648.50,302.63 L649.00,304.16 L649.50,305.69 L650.00,307.23 L650.50,308.76 L651.00,310.31 L651.50,311.85 L652.00,313.40 L652.50,314.95 L653.00,316.51 L653.50,318.07 L654.00,319.63 L654.50,321.19 L655.00,322.75 L655.50,324.32 L656.00,325.88 L656.50,327.45 L657.00,329.02 L657.50,330.59 L658.00,332.16 L658.50,333.73 L659.00,335.31 L659.50,336.88 L660.00,338.45 L660.50,340.02 L661.00,341.59 L661.50,343.16 L662.00,344.73 L662.50,346.30 L663.00,347.87 L663.50,349.44 L664.00,351.00 L664.50,352.56 L665.00,354.12 L665.50,355.68 L666.00,357.24 L666.50,358.79 L667.00,360.34 L667.50,361.88 L668.00,363.43 L668.50,364.97 L669.00,366.50 L669.50,368.03 L670.00,369.56 L670.50,371.09 L671.00,372.60 L671.50,374.12 L672.00,375.63 L672.50,377.13 L673.00,378.63 L673.50,380.12 L674.00,381.61 L674.50,383.09 L675.00,384.57 L675.50,386.04 L676.00,387.50 L676.50,388.95 L677.00,390.40 L677.50,391.84 L678.00,393.28 L678.50,394.71 L679.00,396.12 L679.50,397.53 L680.00,398.94 L680.50,400.33 L681.00,401.72 L681.50,403.09 L682.00,404.46 L682.50,405.82 L683.00,407.17 L683.50,408.51 L684.00,409.84 L684.50,411.15 L685.00,412.46 L685.50,413.76" fill="none" stroke="#E03030" stroke-width="1.2"/><path d="M361.00,474.46 L361.50,474.43 L362.00,474.40 L362.50,474.37 L363.00,474.33 L363.50,474.29 L364.00,474.24 L364.50,474.19 L365.00,474.13 L365.50,474.07 L366.00,474.01 L366.50,473.93 L367.00,473.86 L367.50,473.77 L368.00,473.69 L368.50,473.59 L369.00,473.49 L369.50,473.38 L370.00,473.27 L370.50,473.15 L371.00,473.02 L371.50,472.89 L372.00,472.74 L372.50,472.59 L373.00,472.43 L373.50,472.27 L374.00,472.09 L374.50,471.91 L375.00,471.72 L375.50,471.52 L376.00,471.31 L376.50,471.09 L377.00,470.86 L377.50,470.62 L378.00,470.37 L378.50,470.11 L379.00,469.84 L379.50,469.56 L380.00,469.27 L380.50,468.97 L381.00,468.66 L381.50,468.33 L382.00,468.00 L382.50,467.65 L383.00,467.29 L383.50,466.92 L384.00,466.54 L384.50,466.14 L385.00,465.73 L385.50,465.31 L386.00,464.87 L386.50,464.42 L387.00,463.96 L387.50,463.48 L388.00,462.99 L388.50,462.49 L389.00,461.97 L389.50,461.44 L390.00,460.89 L390.50,460.33 L391.00,459.75 L391.50,459.15 L392.00,458.54 L392.50,457.92 L393.00,457.28 L393.50,456.62 L394.00,455.94 L394.50,455.25 L395.00,454.55 L395.50,453.82 L396.00,453.08 L396.50,452.32 L397.00,451.54 L397.50,450.75 L398.00,449.93 L398.50,449.10 L399.00,448.26 L399.50,447.39 L400.00,446.51 L400.50,445.61 L401.00,444.70 L401.50,443.77 L402.00,442.82 L402.50,441.86 L403.00,440.88 L403.50,439.89 L404.00,438.88 L404.50,437.85 L405.00,436.82 L405.50,435.76 L406.00,434.70 L406.50,433.61 L407.00,432.52 L407.50,431.41 L408.00,430.28 L408.50,429.15 L409.00,428.00 L409.50,426.84 L410.00,425.66 L410.50,424.47 L411.00,423.27 L411.50,422.06 L412.00,420.83 L412.50,419.60 L413.00,418.35 L413.50,417.09 L414.00,415.82 L414.50,414.54 L415.00,413.24 L415.50,411.94 L416.00,410.63 L416.50,409.31 L417.00,407.97 L417.50,406.63 L418.00,405.28 L418.50,403.91 L419.00,402.54 L419.50,401.16 L420.00,399.77 L420.50,398.38 L421.00,396.97 L421.50,395.56 L422.00,394.14 L422.50,392.71 L423.00,391.27 L423.50,389.82 L424.00,388.37 L424.50,386.92 L425.00,385.45 L425.50,383.98 L426.00,382.50 L426.50,381.02 L427.00,379.53 L427.50,378.03 L428.00,376.53 L428.50,375.03 L429.00,373.51 L429.50,372.00 L430.00,370.48 L430.50,368.95 L431.00,367.42 L431.50,365.89 L432.00,364.35 L432.50,362.81 L433.00,361.27 L433.50,359.72 L434.00,358.17 L434.50,356.61 L435.00,355.06 L435.50,353.50 L436.00,351.94 L436.50,350.37 L437.00,348.81 L437.50,347.24 L438.00,345.68 L438.50,344.11 L439.00,342.54 L439.50,340.97 L440.00,339.39 L440.50,337.82 L441.00,336.25 L441.50,334.68 L442.00,333.11 L442.50,331.53 L443.00,329.96 L443.50,328.39 L444.00,326.82 L444.50,325.26 L445.00,323.69 L445.50,322.13 L446.00,320.56 L446.50,319.00 L447.00,317.44 L447.50,315.89 L448.00,314.33 L448.50,312.78 L449.00,311.23 L449.50,309.69 L450.00,308.15 L450.50,306.61 L451.00,305.08 L451.50,303.55 L452.00,302.02 L452.50,300.50 L453.00,298.99 L453.50,297.47 L454.00,295.97 L454.50,294.47 L455.00,292.97 L455.50,291.48 L456.00,290.00 L456.50,288.52 L457.00,287.05 L457.50,285.58 L458.00,284.13 L458.50,282.68 L459.00,281.23 L459.50,279.79 L460.00,278.36 L460.50,276.94 L461.00,275.53 L461.50,274.12 L462.00,272.73 L462.50,271.34 L463.00,269.96 L463.50,268.59 L464.00,267.22 L464.50,265.87 L465.00,264.53 L465.50,263.19 L466.00,261.87 L466.50,260.56 L467.00,259.26 L467.50,257.96 L468.00,256.68 L468.50,255.41 L469.00,254.15 L469.50,252.90 L470.00,251.67 L470.50,250.44 L471.00,249.23 L471.50,248.03 L472.00,246.84 L472.50,245.66 L473.00,244.50 L473.50,243.35 L474.00,242.22 L474.50,241.09 L475.00,239.98 L475.50,238.89 L476.00,237.80 L476.50,236.74 L477.00,235.68 L477.50,234.65 L478.00,233.62 L478.50,232.61 L479.00,231.62 L479.50,230.64 L480.00,229.68 L480.50,228.73 L481.00,227.80 L481.50,226.89 L482.00,225.99 L482.50,225.11 L483.00,224.24 L483.50,223.40 L484.00,222.57 L484.50,221.75 L485.00,220.96 L485.50,220.18 L486.00,219.42 L486.50,218.68 L487.00,217.95 L487.50,217.25 L488.00,216.56 L488.50,215.88 L489.00,215.22 L489.50,214.58 L490.00,213.96 L490.50,213.35 L491.00,212.75 L491.50,212.17 L492.00,211.61 L492.50,211.06 L493.00,210.53 L493.50,210.01 L494.00,209.51 L494.50,209.02 L495.00,208.54 L495.50,208.08 L496.00,207.63 L496.50,207.19 L497.00,206.77 L497.50,206.36 L498.00,205.96 L498.50,205.58 L499.00,205.21 L499.50,204.85 L500.00,204.50 L500.50,204.17 L501.00,203.84 L501.50,203.53 L502.00,203.23 L502.50,202.94 L503.00,202.66 L503.50,202.39 L504.00,202.13 L504.50,201.88 L505.00,201.64 L505.50,201.41 L506.00,201.19 L506.50,200.98 L507.00,200.78 L507.50,200.59 L508.00,200.41 L508.50,200.23 L509.00,200.07 L509.50,199.91 L510.00,199.76 L510.50,199.61 L511.00,199.48 L511.50,199.35 L512.00,199.23 L512.50,199.12 L513.00,199.01 L513.50,198.91 L514.00,198.81 L514.50,198.73 L515.00,198.64 L515.50,198.57 L516.00,198.49 L516.50,198.43 L517.00,198.37 L517.50,198.31 L518.00,198.26 L518.50,198.21 L519.00,198.17 L519.50,198.13 L520.00,198.10 L520.50,198.07 L521.00,198.04 L521.50,198.01 L522.00,197.99 L522.50,197.97 L523.00,197.96 L523.50,197.95 L524.00,197.93 L524.50,197.92 L525.00,197.92 L525.50,197.91 L526.00,197.91 L526.50,197.90 L527.00,197.90 L527.50,197.90 L528.00,197.90 L528.50,197.90 L529.00,197.90 L529.50,197.90 L530.00,197.90 L530.50,197.90 L531.00,197.90 L531.50,197.90 L532.00,197.90 L532.50,197.90 L533.00,197.90 L533.50,197.90 L534.00,197.90 L534.50,197.90 L535.00,197.90 L535.50,197.90 L536.00,197.90 L536.50,197.90 L537.00,197.90 L537.50,197.90 L538.00,197.90 L538.50,197.90 L539.00,197.90 L539.50,197.90 L540.00,197.90 L540.50,197.90 L541.00,197.90 L541.50,197.90 L542.00,197.90 L542.50,197.90 L543.00,197.90 L543.50,197.90 L544.00,197.90 L544.50,197.90 L545.00,197.90 L545.50,197.90 L546.00,197.90 L546.50,197.90 L547.00,197.90 L547.50,197.90 L548.00,197.90 L548.50,197.90 L549.00,197.90 L549.50,197.90 L550.00,197.90 L550.50,197.90 L551.00,197.90 L551.50,197.90 L552.00,197.90 L552.50,197.90 L553.00,197.90 L553.50,197.90 L554.00,197.90 L554.50,197.90 L555.00,197.90 L555.50,197.90 L556.00,197.90 L556.50,197.90 L557.00,197.90 L557.50,197.90 L558.00,197.90 L558.50,197.90 L559.00,197.90 L559.50,197.90 L560.00,197.90 L560.50,197.90 L561.00,197.90 L561.50,197.90 L562.00,197.90 L562.50,197.90 L563.00,197.90 L563.50,197.90 L564.00,197.90 L564.50,197.90 L565.00,197.90 L565.50,197.90 L566.00,197.90 L566.50,197.90 L567.00,197.90 L567.50,197.90 L568.00,197.90 L568.50,197.90 L569.00,197.91 L569.50,197.91 L570.00,197.91 L570.50,197.92 L571.00,197.93 L571.50,197.94 L572.00,197.95 L572.50,197.96 L573.00,197.98 L573.50,198.00 L574.00,198.02 L574.50,198.05 L575.00,198.08 L575.50,198.11 L576.00,198.15 L576.50,198.19 L577.00,198.23 L577.50,198.28 L578.00,198.33 L578.50,198.39 L579.00,198.45 L579.50,198.52 L580.00,198.60 L580.50,198.68 L581.00,198.76 L581.50,198.85 L582.00,198.95 L582.50,199.05 L583.00,199.16 L583.50,199.28 L584.00,199.40 L584.50,199.53 L585.00,199.67 L585.50,199.82 L586.00,199.97 L586.50,200.13 L587.00,200.30 L587.50,200.48 L588.00,200.67 L588.50,200.86 L589.00,201.07 L589.50,201.28 L590.00,201.50 L590.50,201.74 L591.00,201.98 L591.50,202.23 L592.00,202.49 L592.50,202.77 L593.00,203.05 L593.50,203.35 L594.00,203.65 L594.50,203.97 L595.00,204.30 L595.50,204.64 L596.00,204.99 L596.50,205.36 L597.00,205.73 L597.50,206.12 L598.00,206.52 L598.50,206.94 L599.00,207.36 L599.50,207.81 L600.00,208.26 L600.50,208.73 L601.00,209.21 L601.50,209.71 L602.00,210.22 L602.50,210.74 L603.00,211.28 L603.50,211.83 L604.00,212.40 L604.50,212.99 L605.00,213.59 L605.50,214.21 L606.00,214.84 L606.50,215.49 L607.00,216.15 L607.50,216.83 L608.00,217.53 L608.50,218.24 L609.00,218.97 L609.50,219.72 L610.00,220.49 L610.50,221.27 L611.00,222.08 L611.50,222.90 L612.00,223.73 L612.50,224.59 L613.00,225.46 L613.50,226.35 L614.00,227.25 L614.50,228.17 L615.00,229.11 L615.50,230.06 L616.00,231.03 L616.50,232.01 L617.00,233.01 L617.50,234.03 L618.00,235.06 L618.50,236.10 L619.00,237.16 L619.50,238.24 L620.00,239.32 L620.50,240.42 L621.00,241.54 L621.50,242.67 L622.00,243.81 L622.50,244.97 L623.00,246.13 L623.50,247.31 L624.00,248.51 L624.50,249.71 L625.00,250.93 L625.50,252.16 L626.00,253.40 L626.50,254.65 L627.00,255.92 L627.50,257.19 L628.00,258.48 L628.50,259.78 L629.00,261.08 L629.50,262.40 L630.00,263.73 L630.50,265.06 L631.00,266.41 L631.50,267.77 L632.00,269.13 L632.50,270.51 L633.00,271.89 L633.50,273.28 L634.00,274.68 L634.50,276.09 L635.00,277.51 L635.50,278.94 L636.00,280.37 L636.50,281.81 L637.00,283.25 L637.50,284.71 L638.00,286.17 L638.50,287.64 L639.00,289.11 L639.50,290.59 L640.00,292.08 L640.50,293.57 L641.00,295.07 L641.50,296.57 L642.00,298.08 L642.50,299.59 L643.00,301.11 L643.50,302.63 L644.00,304.16 L644.50,305.69 L645.00,307.23 L645.50,308.76 L646.00,310.31 L646.50,311.85 L647.00,313.40 L647.50,314.95 L648.00,316.51 L648.50,318.07 L649.00,319.63 L649.50,321.19 L650.00,322.75 L650.50,324.32 L651.00,325.88 L651.50,327.45 L652.00,329.02 L652.50,330.59 L653.00,332.16 L653.50,333.73 L654.00,335.31 L654.50,336.88 L655.00,338.45 L655.50,340.02 L656.00,341.59 L656.50,343.16 L657.00,344.73 L657.50,346.30 L658.00,347.87 L658.50,349.44 L659.00,351.00 L659.50,352.56 L660.00,354.12 L660.50,355.68 L661.00,357.24 L661.50,358.79 L662.00,360.34 L662.50,361.88 L663.00,363.43 L663.50,364.97 L664.00,366.50 L664.50,368.03 L665.00,369.56 L665.50,371.09 L666.00,372.60 L666.50,374.12 L667.00,375.63 L667.50,377.13 L668.00,378.63 L668.50,380.12 L669.00,381.61 L669.50,383.09 L670.00,384.57 L670.50,386.04 L671.00,387.50 L671.50,388.95 L672.00,390.40 L672.50,391.84 L673.00,393.28 L673.50,394.71 L674.00,396.12 L674.50,397.53 L675.00,398.94 L675.50,400.33 L676.00,401.72 L676.50,403.09 L677.00,404.46 L677.50,405.82 L678.00,407.17 L678.50,408.51 L679.00,409.84 L679.50,411.15 L680.00,412.46 L680.50,413.76 L681.00,415.05 L681.50,416.33 L682.00,417.59 L682.50,418.85 L683.00,420.09 L683.50,421.32 L684.00,422.54 L684.50,423.75 L685.00,424.95 L685.50,426.13" fill="none" stroke="#2020D0" stroke-width="1.2"/><path d="M315.50,337.00 C321.25,337.00 342.47,337.08 350.00,337.00 C357.53,336.92 358.12,337.08 360.70,336.50 C363.28,335.92 363.87,335.42 365.50,333.50 C367.13,331.58 368.75,329.00 370.50,325.00 C372.25,321.00 374.08,315.17 376.00,309.50 C377.92,303.83 380.00,297.17 382.00,291.00 C384.00,284.83 386.00,278.67 388.00,272.50 C390.00,266.33 392.00,260.17 394.00,254.00 C396.00,247.83 398.17,241.17 400.00,235.50 C401.83,229.83 403.42,224.75 405.00,220.00 C406.58,215.25 408.08,210.33 409.50,207.00 C410.92,203.67 412.08,201.67 413.50,200.00 C414.92,198.33 416.13,197.18 418.00,197.00 C419.87,196.82 422.25,197.88 424.70,198.90 C427.15,199.92 430.03,202.75 432.70,203.10 C435.37,203.45 437.82,201.93 440.70,201.00 C443.58,200.07 447.33,197.28 450.00,197.50 C452.67,197.72 454.78,199.72 456.70,202.30 C458.62,204.88 459.95,208.88 461.50,213.00 C463.05,217.12 464.58,222.50 466.00,227.00 C467.42,231.50 467.53,233.17 470.00,240.00 C472.47,246.83 478.05,260.50 480.80,268.00 C483.55,275.50 484.63,279.33 486.50,285.00 C488.37,290.67 490.08,296.92 492.00,302.00 C493.92,307.08 496.25,311.50 498.00,315.50 C499.75,319.50 501.00,323.63 502.50,326.00 C504.00,328.37 505.38,329.15 507.00,329.70 C508.62,330.25 510.45,329.85 512.20,329.30 C513.95,328.75 515.37,326.88 517.50,326.40 C519.63,325.92 522.50,325.85 525.00,326.40 C527.50,326.95 530.00,328.90 532.50,329.70 C535.00,330.50 537.75,331.07 540.00,331.20 C542.25,331.33 543.50,330.50 546.00,330.50 C548.50,330.50 550.75,331.08 555.00,331.20 C559.25,331.32 567.75,330.82 571.50,331.20 C575.25,331.58 575.50,332.12 577.50,333.50 C579.50,334.88 581.75,336.75 583.50,339.50 C585.25,342.25 586.50,345.00 588.00,350.00 C589.50,355.00 591.00,362.83 592.50,369.50 C594.00,376.17 594.92,381.92 597.00,390.00 C599.08,398.08 602.33,409.33 605.00,418.00 C607.67,426.67 610.33,434.67 613.00,442.00 C615.67,449.33 619.00,457.33 621.00,462.00 C623.00,466.67 623.00,468.17 625.00,470.00 C627.00,471.83 630.17,473.17 633.00,473.00 C635.83,472.83 639.33,469.33 642.00,469.00 C644.67,468.67 646.17,470.10 649.00,471.00 C651.83,471.90 656.00,474.23 659.00,474.40 C662.00,474.57 664.33,475.07 667.00,472.00 C669.67,468.93 672.67,461.33 675.00,456.00 C677.33,450.67 679.33,445.33 681.00,440.00 C682.67,434.67 684.33,426.67 685.00,424.00" fill="none" stroke="#30C030" stroke-width="1.2"/><path d="M315.5,183.5H685.5" stroke="#404040" stroke-width="1"/><path d="M315.85,183V489" stroke="#282828" stroke-width="1.7"/><path d="M685.75,183V489" stroke="#202020" stroke-width="1.5"/><path d="M315,487.75H687" stroke="#383838" stroke-width="2"/><path d="M315.5,484.50h6" stroke="#202020" stroke-width="1"/><path d="M315.5,481.50h3" stroke="#202020" stroke-width="1"/><path d="M315.5,477.50h3" stroke="#202020" stroke-width="1"/><path d="M315.5,474.50h3" stroke="#202020" stroke-width="1"/><path d="M315.5,471.50h3" stroke="#202020" stroke-width="1"/><path d="M315.5,467.50h6" stroke="#202020" stroke-width="1"/><path d="M315.5,464.50h3" stroke="#202020" stroke-width="1"/><path d="M315.5,461.50h3" stroke="#202020" stroke-width="1"/><path d="M315.5,457.50h3" stroke="#202020" stroke-width="1"/><path d="M315.5,454.50h3" stroke="#202020" stroke-width="1"/><path d="M315.5,450.50h6" stroke="#202020" stroke-width="1"/><path d="M315.5,447.50h3" stroke="#202020" stroke-width="1"/><path d="M315.5,444.50h3" stroke="#202020" stroke-width="1"/><path d="M315.5,440.50h3" stroke="#202020" stroke-width="1"/><path d="M315.5,437.50h3" stroke="#202020" stroke-width="1"/><path d="M315.5,434.50h6" stroke="#202020" stroke-width="1"/><path d="M315.5,430.50h3" stroke="#202020" stroke-width="1"/><path d="M315.5,427.50h3" stroke="#202020" stroke-width="1"/><path d="M315.5,423.50h3" stroke="#202020" stroke-width="1"/><path d="M315.5,420.50h3" stroke="#202020" stroke-width="1"/><path d="M315.5,417.50h6" stroke="#202020" stroke-width="1"/><path d="M315.5,413.50h3" stroke="#202020" stroke-width="1"/><path d="M315.5,410.50h3" stroke="#202020" stroke-width="1"/><path d="M315.5,406.50h3" stroke="#202020" stroke-width="1"/><path d="M315.5,403.50h3" stroke="#202020" stroke-width="1"/><path d="M315.5,400.50h6" stroke="#202020" stroke-width="1"/><path d="M315.5,396.50h3" stroke="#202020" stroke-width="1"/><path d="M315.5,393.50h3" stroke="#202020" stroke-width="1"/><path d="M315.5,390.50h3" stroke="#202020" stroke-width="1"/><path d="M315.5,386.50h3" stroke="#202020" stroke-width="1"/><path d="M315.5,383.50h6" stroke="#202020" stroke-width="1"/><path d="M315.5,379.50h3" stroke="#202020" stroke-width="1"/><path d="M315.5,376.50h3" stroke="#202020" stroke-width="1"/><path d="M315.5,373.50h3" stroke="#202020" stroke-width="1"/><path d="M315.5,369.50h3" stroke="#202020" stroke-width="1"/><path d="M315.5,366.50h6" stroke="#202020" stroke-width="1"/><path d="M315.5,362.50h3" stroke="#202020" stroke-width="1"/><path d="M315.5,359.50h3" stroke="#202020" stroke-width="1"/><path d="M315.5,356.50h3" stroke="#202020" stroke-width="1"/><path d="M315.5,352.50h3" stroke="#202020" stroke-width="1"/><path d="M315.5,349.50h6" stroke="#202020" stroke-width="1"/><path d="M315.5,346.50h3" stroke="#202020" stroke-width="1"/><path d="M315.5,342.50h3" stroke="#202020" stroke-width="1"/><path d="M315.5,339.50h3" stroke="#202020" stroke-width="1"/><path d="M315.5,335.50h3" stroke="#202020" stroke-width="1"/><path d="M315.5,332.50h6" stroke="#202020" stroke-width="1"/><path d="M315.5,329.50h3" stroke="#202020" stroke-width="1"/><path d="M315.5,325.50h3" stroke="#202020" stroke-width="1"/><path d="M315.5,322.50h3" stroke="#202020" stroke-width="1"/><path d="M315.5,318.50h3" stroke="#202020" stroke-width="1"/><path d="M315.5,315.50h6" stroke="#202020" stroke-width="1"/><path d="M315.5,312.50h3" stroke="#202020" stroke-width="1"/><path d="M315.5,308.50h3" stroke="#202020" stroke-width="1"/><path d="M315.5,305.50h3" stroke="#202020" stroke-width="1"/><path d="M315.5,302.50h3" stroke="#202020" stroke-width="1"/><path d="M315.5,298.50h6" stroke="#202020" stroke-width="1"/><path d="M315.5,295.50h3" stroke="#202020" stroke-width="1"/><path d="M315.5,291.50h3" stroke="#202020" stroke-width="1"/><path d="M315.5,288.50h3" stroke="#202020" stroke-width="1"/><path d="M315.5,285.50h3" stroke="#202020" stroke-width="1"/><path d="M315.5,281.50h6" stroke="#202020" stroke-width="1"/><path d="M315.5,278.50h3" stroke="#202020" stroke-width="1"/><path d="M315.5,275.50h3" stroke="#202020" stroke-width="1"/><path d="M315.5,271.50h3" stroke="#202020" stroke-width="1"/><path d="M315.5,268.50h3" stroke="#202020" stroke-width="1"/><path d="M315.5,264.50h6" stroke="#202020" stroke-width="1"/><path d="M315.5,261.50h3" stroke="#202020" stroke-width="1"/><path d="M315.5,258.50h3" stroke="#202020" stroke-width="1"/><path d="M315.5,254.50h3" stroke="#202020" stroke-width="1"/><path d="M315.5,251.50h3" stroke="#202020" stroke-width="1"/><path d="M315.5,247.50h6" stroke="#202020" stroke-width="1"/><path d="M315.5,244.50h3" stroke="#202020" stroke-width="1"/><path d="M315.5,241.50h3" stroke="#202020" stroke-width="1"/><path d="M315.5,237.50h3" stroke="#202020" stroke-width="1"/><path d="M315.5,234.50h3" stroke="#202020" stroke-width="1"/><path d="M315.5,231.50h6" stroke="#202020" stroke-width="1"/><path d="M315.5,227.50h3" stroke="#202020" stroke-width="1"/><path d="M315.5,224.50h3" stroke="#202020" stroke-width="1"/><path d="M315.5,220.50h3" stroke="#202020" stroke-width="1"/><path d="M315.5,217.50h3" stroke="#202020" stroke-width="1"/><path d="M315.5,214.50h6" stroke="#202020" stroke-width="1"/><path d="M315.5,210.50h3" stroke="#202020" stroke-width="1"/><path d="M315.5,207.50h3" stroke="#202020" stroke-width="1"/><path d="M315.5,203.50h3" stroke="#202020" stroke-width="1"/><path d="M315.5,200.50h3" stroke="#202020" stroke-width="1"/><path d="M315.5,197.50h6" stroke="#202020" stroke-width="1"/><path d="M315.5,193.50h3" stroke="#202020" stroke-width="1"/><path d="M315.5,190.50h3" stroke="#202020" stroke-width="1"/><path d="M315.5,187.50h3" stroke="#202020" stroke-width="1"/><path d="M315.5,183.50h3" stroke="#202020" stroke-width="1"/><path d="M680.5,481.50h6.5" stroke="#202020" stroke-width="1"/><path d="M683.5,478.50h4.5" stroke="#202020" stroke-width="1"/><path d="M683.5,474.50h4.5" stroke="#202020" stroke-width="1"/><path d="M683.5,471.50h4.5" stroke="#202020" stroke-width="1"/><path d="M683.5,468.50h4.5" stroke="#202020" stroke-width="1"/><path d="M680.5,465.50h6.5" stroke="#202020" stroke-width="1"/><path d="M683.5,462.50h4.5" stroke="#202020" stroke-width="1"/><path d="M683.5,458.50h4.5" stroke="#202020" stroke-width="1"/><path d="M683.5,455.50h4.5" stroke="#202020" stroke-width="1"/><path d="M683.5,452.50h4.5" stroke="#202020" stroke-width="1"/><path d="M680.5,449.50h6.5" stroke="#202020" stroke-width="1"/><path d="M683.5,446.50h4.5" stroke="#202020" stroke-width="1"/><path d="M683.5,442.50h4.5" stroke="#202020" stroke-width="1"/><path d="M683.5,439.50h4.5" stroke="#202020" stroke-width="1"/><path d="M683.5,436.50h4.5" stroke="#202020" stroke-width="1"/><path d="M680.5,433.50h6.5" stroke="#202020" stroke-width="1"/><path d="M683.5,430.50h4.5" stroke="#202020" stroke-width="1"/><path d="M683.5,426.50h4.5" stroke="#202020" stroke-width="1"/><path d="M683.5,423.50h4.5" stroke="#202020" stroke-width="1"/><path d="M683.5,420.50h4.5" stroke="#202020" stroke-width="1"/><path d="M680.5,417.50h6.5" stroke="#202020" stroke-width="1"/><path d="M683.5,413.50h4.5" stroke="#202020" stroke-width="1"/><path d="M683.5,410.50h4.5" stroke="#202020" stroke-width="1"/><path d="M683.5,407.50h4.5" stroke="#202020" stroke-width="1"/><path d="M683.5,404.50h4.5" stroke="#202020" stroke-width="1"/><path d="M680.5,401.50h6.5" stroke="#202020" stroke-width="1"/><path d="M683.5,397.50h4.5" stroke="#202020" stroke-width="1"/><path d="M683.5,394.50h4.5" stroke="#202020" stroke-width="1"/><path d="M683.5,391.50h4.5" stroke="#202020" stroke-width="1"/><path d="M683.5,388.50h4.5" stroke="#202020" stroke-width="1"/><path d="M680.5,385.50h6.5" stroke="#202020" stroke-width="1"/><path d="M683.5,381.50h4.5" stroke="#202020" stroke-width="1"/><path d="M683.5,378.50h4.5" stroke="#202020" stroke-width="1"/><path d="M683.5,375.50h4.5" stroke="#202020" stroke-width="1"/><path d="M683.5,372.50h4.5" stroke="#202020" stroke-width="1"/><path d="M680.5,369.50h6.5" stroke="#202020" stroke-width="1"/><path d="M683.5,365.50h4.5" stroke="#202020" stroke-width="1"/><path d="M683.5,362.50h4.5" stroke="#202020" stroke-width="1"/><path d="M683.5,359.50h4.5" stroke="#202020" stroke-width="1"/><path d="M683.5,356.50h4.5" stroke="#202020" stroke-width="1"/><path d="M680.5,353.50h6.5" stroke="#202020" stroke-width="1"/><path d="M683.5,349.50h4.5" stroke="#202020" stroke-width="1"/><path d="M683.5,346.50h4.5" stroke="#202020" stroke-width="1"/><path d="M683.5,343.50h4.5" stroke="#202020" stroke-width="1"/><path d="M683.5,340.50h4.5" stroke="#202020" stroke-width="1"/><path d="M680.5,337.50h6.5" stroke="#202020" stroke-width="1"/><path d="M683.5,333.50h4.5" stroke="#202020" stroke-width="1"/><path d="M683.5,330.50h4.5" stroke="#202020" stroke-width="1"/><path d="M683.5,327.50h4.5" stroke="#202020" stroke-width="1"/><path d="M683.5,324.50h4.5" stroke="#202020" stroke-width="1"/><path d="M680.5,320.50h6.5" stroke="#202020" stroke-width="1"/><path d="M683.5,317.50h4.5" stroke="#202020" stroke-width="1"/><path d="M683.5,314.50h4.5" stroke="#202020" stroke-width="1"/><path d="M683.5,311.50h4.5" stroke="#202020" stroke-width="1"/><path d="M683.5,308.50h4.5" stroke="#202020" stroke-width="1"/><path d="M680.5,304.50h6.5" stroke="#202020" stroke-width="1"/><path d="M683.5,301.50h4.5" stroke="#202020" stroke-width="1"/><path d="M683.5,298.50h4.5" stroke="#202020" stroke-width="1"/><path d="M683.5,295.50h4.5" stroke="#202020" stroke-width="1"/><path d="M683.5,292.50h4.5" stroke="#202020" stroke-width="1"/><path d="M680.5,288.50h6.5" stroke="#202020" stroke-width="1"/><path d="M683.5,285.50h4.5" stroke="#202020" stroke-width="1"/><path d="M683.5,282.50h4.5" stroke="#202020" stroke-width="1"/><path d="M683.5,279.50h4.5" stroke="#202020" stroke-width="1"/><path d="M683.5,276.50h4.5" stroke="#202020" stroke-width="1"/><path d="M680.5,272.50h6.5" stroke="#202020" stroke-width="1"/><path d="M683.5,269.50h4.5" stroke="#202020" stroke-width="1"/><path d="M683.5,266.50h4.5" stroke="#202020" stroke-width="1"/><path d="M683.5,263.50h4.5" stroke="#202020" stroke-width="1"/><path d="M683.5,260.50h4.5" stroke="#202020" stroke-width="1"/><path d="M680.5,256.50h6.5" stroke="#202020" stroke-width="1"/><path d="M683.5,253.50h4.5" stroke="#202020" stroke-width="1"/><path d="M683.5,250.50h4.5" stroke="#202020" stroke-width="1"/><path d="M683.5,247.50h4.5" stroke="#202020" stroke-width="1"/><path d="M683.5,243.50h4.5" stroke="#202020" stroke-width="1"/><path d="M680.5,240.50h6.5" stroke="#202020" stroke-width="1"/><path d="M683.5,237.50h4.5" stroke="#202020" stroke-width="1"/><path d="M683.5,234.50h4.5" stroke="#202020" stroke-width="1"/><path d="M683.5,231.50h4.5" stroke="#202020" stroke-width="1"/><path d="M683.5,227.50h4.5" stroke="#202020" stroke-width="1"/><path d="M680.5,224.50h6.5" stroke="#202020" stroke-width="1"/><path d="M683.5,221.50h4.5" stroke="#202020" stroke-width="1"/><path d="M683.5,218.50h4.5" stroke="#202020" stroke-width="1"/><path d="M683.5,215.50h4.5" stroke="#202020" stroke-width="1"/><path d="M683.5,211.50h4.5" stroke="#202020" stroke-width="1"/><path d="M680.5,208.50h6.5" stroke="#202020" stroke-width="1"/><path d="M683.5,205.50h4.5" stroke="#202020" stroke-width="1"/><path d="M683.5,202.50h4.5" stroke="#202020" stroke-width="1"/><path d="M683.5,199.50h4.5" stroke="#202020" stroke-width="1"/><path d="M683.5,195.50h4.5" stroke="#202020" stroke-width="1"/><path d="M680.5,192.50h6.5" stroke="#202020" stroke-width="1"/><path d="M683.5,189.50h4.5" stroke="#202020" stroke-width="1"/><path d="M683.5,186.50h4.5" stroke="#202020" stroke-width="1"/><path d="M683.5,183.50h4.5" stroke="#202020" stroke-width="1"/><path d="M315.50,488v-4.5" stroke="#202020" stroke-width="1"/><path d="M327.50,488v-1.8" stroke="#202020" stroke-width="1"/><path d="M340.50,488v-1.8" stroke="#202020" stroke-width="1"/><path d="M352.50,488v-1.8" stroke="#202020" stroke-width="1"/><path d="M364.50,488v-1.8" stroke="#202020" stroke-width="1"/><path d="M377.50,488v-4.5" stroke="#202020" stroke-width="1"/><path d="M389.50,488v-1.8" stroke="#202020" stroke-width="1"/><path d="M401.50,488v-1.8" stroke="#202020" stroke-width="1"/><path d="M414.50,488v-1.8" stroke="#202020" stroke-width="1"/><path d="M426.50,488v-1.8" stroke="#202020" stroke-width="1"/><path d="M438.50,488v-4.5" stroke="#202020" stroke-width="1"/><path d="M451.50,488v-1.8" stroke="#202020" stroke-width="1"/><path d="M463.50,488v-1.8" stroke="#202020" stroke-width="1"/><path d="M475.50,488v-1.8" stroke="#202020" stroke-width="1"/><path d="M487.50,488v-1.8" stroke="#202020" stroke-width="1"/><path d="M500.50,488v-4.5" stroke="#202020" stroke-width="1"/><path d="M512.50,488v-1.8" stroke="#202020" stroke-width="1"/><path d="M524.50,488v-1.8" stroke="#202020" stroke-width="1"/><path d="M537.50,488v-1.8" stroke="#202020" stroke-width="1"/><path d="M549.50,488v-1.8" stroke="#202020" stroke-width="1"/><path d="M561.50,488v-4.5" stroke="#202020" stroke-width="1"/><path d="M574.50,488v-1.8" stroke="#202020" stroke-width="1"/><path d="M586.50,488v-1.8" stroke="#202020" stroke-width="1"/><path d="M598.50,488v-1.8" stroke="#202020" stroke-width="1"/><path d="M611.50,488v-1.8" stroke="#202020" stroke-width="1"/><path d="M623.50,488v-4.5" stroke="#202020" stroke-width="1"/><path d="M635.50,488v-1.8" stroke="#202020" stroke-width="1"/><path d="M648.50,488v-1.8" stroke="#202020" stroke-width="1"/><path d="M660.50,488v-1.8" stroke="#202020" stroke-width="1"/><path d="M672.50,488v-1.8" stroke="#202020" stroke-width="1"/><path d="M685.50,488v-4.5" stroke="#202020" stroke-width="1"/><g style="font-family:&quot;Liberation Sans&quot;,sans-serif;font-size:8.7px;font-weight:bold;fill:#333;letter-spacing:.6px"><text x="310.6" y="487.85" text-anchor="end">61000</text><text x="310.6" y="470.94" text-anchor="end">61500</text><text x="310.6" y="454.02" text-anchor="end">62000</text><text x="310.6" y="437.11" text-anchor="end">62500</text><text x="310.6" y="420.19" text-anchor="end">63000</text><text x="310.6" y="403.28" text-anchor="end">63500</text><text x="310.6" y="386.36" text-anchor="end">64000</text><text x="310.6" y="369.45" text-anchor="end">64500</text><text x="310.6" y="352.53" text-anchor="end">65000</text><text x="310.6" y="335.62" text-anchor="end">65500</text><text x="310.6" y="318.70" text-anchor="end">66000</text><text x="310.6" y="301.79" text-anchor="end">66500</text><text x="310.6" y="284.87" text-anchor="end">67000</text><text x="310.6" y="267.96" text-anchor="end">67500</text><text x="310.6" y="251.04" text-anchor="end">68000</text><text x="310.6" y="234.12" text-anchor="end">68500</text><text x="310.6" y="217.21" text-anchor="end">69000</text><text x="310.6" y="200.29" text-anchor="end">69500</text><text x="692" y="484.42">-450</text><text x="692" y="468.38">-400</text><text x="692" y="452.35">-350</text><text x="692" y="436.31">-300</text><text x="692" y="420.28">-250</text><text x="692" y="404.24">-200</text><text x="692" y="388.21">-150</text><text x="692" y="372.17">-100</text><text x="692" y="356.14">-50</text><text x="692" y="340.10">0</text><text x="692" y="324.06">50</text><text x="692" y="308.03">100</text><text x="692" y="292.00">150</text><text x="692" y="275.96">200</text><text x="692" y="259.93">250</text><text x="692" y="243.89">300</text><text x="692" y="227.85">350</text><text x="692" y="211.82">400</text><text x="692" y="195.78">450</text><text x="315.50" y="503" text-anchor="middle">0.00</text><text x="377.10" y="503" text-anchor="middle">0.05</text><text x="438.70" y="503" text-anchor="middle">0.10</text><text x="500.30" y="503" text-anchor="middle">0.15</text><text x="561.90" y="503" text-anchor="middle">0.20</text><text x="623.50" y="503" text-anchor="middle">0.25</text><text x="685.10" y="503" text-anchor="middle">0.30</text></g></svg>
<div class="bt" style="left:357px;top:537px;width:87px;height:25px;line-height:28px;line-height:11px;padding-top:3px;height:22px;">Export All to<br>Open C Program</div>
<div class="bt" style="left:469px;top:537px;width:87px;height:25px;line-height:28px;line-height:11px;padding-top:3px;height:22px;">Import All from<br>Open C Program</div>
<div style="left:626px;top:537px;width:1px;height:34px;background:#555;"></div>
<div style="left:0;top:577px;width:800px;height:23px;background:linear-gradient(180deg,#3E86F6 0%,#2F6FE8 8%,#2660DE 30%,#245CDA 70%,#2256D2 90%,#1E4CC0 100%);"></div>
<div style="left:0;top:577px;width:76px;height:23px;background:linear-gradient(180deg,#6CC06C 0%,#46A846 12%,#3C9C3C 45%,#389438 80%,#2E842E 100%);border-radius:0 10px 10px 0;box-shadow:inset -2px 0 2px rgba(0,40,0,.35);"></div>
<div class="t" style="left:26px;top:579px;font-family:&quot;Liberation Sans&quot;,sans-serif;font-size:13px;font-weight:bold;font-style:italic;color:#fff;line-height:20px;text-shadow:1px 1px 1px rgba(0,0,0,.45)">start</div>
<svg style="position:absolute;left:8px;top:581px" width="16" height="15" viewBox="0 0 16 15"><path d="M2.5 1.5Q5 0.5 7.5 1.5L6.8 6.8Q4.3 5.8 1.8 6.8Z" fill="#F0602A"/><path d="M8.5 1.8Q11 2.8 14.5 1.8L13.8 7.2Q11 8.2 7.8 7.2Z" fill="#50C030"/><path d="M1.6 7.6Q4.1 6.6 6.6 7.6L5.9 12.9Q3.4 11.9 .9 12.9Z" fill="#3A8CF0"/><path d="M7.6 8.1Q10.5 9.1 13.6 8.1L12.9 13.5Q10 14.5 6.9 13.5Z" fill="#F8C828"/></svg>
<div style="left:83px;top:580px;width:121px;height:18px;background:linear-gradient(180deg,#1A44A8 0%,#1E4DB8 20%,#1E4EBA 100%);border-radius:3px;box-shadow:inset 1px 1px 1px rgba(0,0,0,.35)"></div>
<div class="t" style="left:104.5px;top:584px;font-family:&quot;Liberation Sans&quot;,sans-serif;font-weight:normal;font-size:8.3px;color:#fff;line-height:11px;">KMotion - Connected</div>
<svg style="position:absolute;left:89px;top:582px" width="15" height="14" viewBox="0 0 15 14"><g fill="none" stroke="#0A1A50"><circle cx="4.5" cy="1.8" r=".9" fill="#0A1A50"/><path d="M2.5 4.6L6 4.2M8 4L13 3.6" stroke-width="1.4"/><path d="M1.8 7.2L13.6 6.6L12 12.8L1 13.2Z" stroke-width="1.5"/><path d="M3.5 9.8L6.5 8.8L5.5 11.2L10 9.2L9.2 11.6" stroke-width="1.1"/></g><path d="M2 4.9L2.6 6.2" stroke="#0A1A50" stroke-width="1"/></svg>
<div style="left:206px;top:580px;width:120px;height:18px;background:linear-gradient(180deg,#5A9AFA 0%,#3E83F2 12%,#3A7CEE 60%,#346FE4 100%);border-radius:3px;box-shadow:inset 1px 1px 0 rgba(255,255,255,.25)"></div>
<div class="t" style="left:227.5px;top:584px;font-family:&quot;Liberation Sans&quot;,sans-serif;font-weight:normal;font-size:8.3px;color:#fff;line-height:11px;">2 Notepad</div>
<div style="left:316px;top:589px;width:0;height:0;border-left:3px solid transparent;border-right:3px solid transparent;border-top:3px solid #fff"></div>
<svg style="position:absolute;left:212px;top:582px" width="13" height="14"><path d="M2 2L9 .5L11 11.5L4 13Z" fill="#8CC8F0" stroke="#3A70B8" stroke-width=".8"/><path d="M3.5 3L8.5 2" stroke="#fff" stroke-width=".8"/></svg>
<div style="left:328px;top:580px;width:120px;height:18px;background:linear-gradient(180deg,#5A9AFA 0%,#3E83F2 12%,#3A7CEE 60%,#346FE4 100%);border-radius:3px;box-shadow:inset 1px 1px 0 rgba(255,255,255,.25)"></div>
<div class="t" style="left:349.5px;top:584px;font-family:&quot;Liberation Sans&quot;,sans-serif;font-weight:normal;font-size:8.3px;color:#fff;line-height:11px;">3 Windows Explorer</div>
<div style="left:438px;top:589px;width:0;height:0;border-left:3px solid transparent;border-right:3px solid transparent;border-top:3px solid #fff"></div>
<svg style="position:absolute;left:334px;top:583px" width="14" height="12"><path d="M1 2.5h4.5l1 1.2H13V11H1Z" fill="#F8D870" stroke="#B8902A" stroke-width=".8"/><path d="M1 5h12" stroke="#FFF0B0" stroke-width="1"/></svg>
<div style="left:450px;top:580px;width:121px;height:18px;background:linear-gradient(180deg,#5A9AFA 0%,#3E83F2 12%,#3A7CEE 60%,#346FE4 100%);border-radius:3px;box-shadow:inset 1px 1px 0 rgba(255,255,255,.25)"></div>
<div class="t" style="left:471.5px;top:584px;font-family:&quot;Liberation Sans&quot;,sans-serif;font-weight:normal;font-size:8.3px;color:#fff;line-height:11px;">Mach3 CNC  License...</div>
<div style="left:456px;top:582px;width:12px;height:12px;border-radius:50%;background:radial-gradient(circle at 50% 45%,#A04030 0%,#602018 50%,#201010 100%);"></div>
<div style="left:573px;top:580px;width:121px;height:18px;background:linear-gradient(180deg,#5A9AFA 0%,#3E83F2 12%,#3A7CEE 60%,#346FE4 100%);border-radius:3px;box-shadow:inset 1px 1px 0 rgba(255,255,255,.25)"></div>
<div class="t" style="left:594.5px;top:584px;font-family:&quot;Liberation Sans&quot;,sans-serif;font-weight:normal;font-size:8.3px;color:#fff;line-height:11px;">KMotionCNC - Conne...</div>
<svg style="position:absolute;left:580px;top:581px" width="12" height="14"><g fill="#20A0A0"><rect x="1" y="1" width="3" height="3"/><rect x="6" y="2" width="3" height="3"/><rect x="2" y="5" width="4" height="3"/><rect x="6" y="7" width="4" height="3"/><rect x="1" y="9" width="3" height="4"/><rect x="5" y="11" width="5" height="2"/></g><g fill="#106060"><rect x="3" y="3" width="1" height="1"/><rect x="8" y="9" width="1" height="1"/></g></svg>
<div style="left:702px;top:583px;width:9px;height:10px;background:linear-gradient(135deg,#FFFFF0,#F0E8A0);border:1px solid #333;border-radius:1px;"></div>
<div class="t" style="left:704px;top:582px;font-family:&quot;Liberation Sans&quot;,sans-serif;font-size:9px;font-weight:bold;color:#000;line-height:12px">?</div>
<svg style="position:absolute;left:721px;top:581px" width="9" height="14"><rect x="2.5" y="1.5" width="5" height="3" fill="none" stroke="#fff" stroke-width=".9"/><rect x="1" y="3" width="5" height="3" fill="#3A70E0" stroke="#fff" stroke-width=".9"/><path d="M2 10h5l-2.5 3z" fill="#fff"/></svg>
<div style="left:741px;top:577px;width:59px;height:23px;background:linear-gradient(180deg,#22B0F8 0%,#109CF0 10%,#0C95EC 50%,#0C8EE6 90%,#1080D8 100%);border-left:1px solid #1A5ACC;"></div>
<div class="t" style="left:756px;top:584px;font-family:&quot;Liberation Sans&quot;,sans-serif;font-weight:normal;font-size:8.3px;color:#fff;line-height:11px;font-size:8.3px">7:04 PM</div>
<div style="left:735px;top:582px;width:13px;height:13px;border-radius:50%;background:radial-gradient(circle at 45% 35%,#A8D8FF 0%,#3C8CF0 60%,#1E60D0 100%);box-shadow:0 0 0 1px rgba(255,255,255,.7);"></div>
<svg style="position:absolute;left:735px;top:582px" width="13" height="13"><path d="M7.5 3.5L4.5 6.5L7.5 9.5" stroke="#fff" stroke-width="1.8" fill="none"/></svg>
</body></html>
